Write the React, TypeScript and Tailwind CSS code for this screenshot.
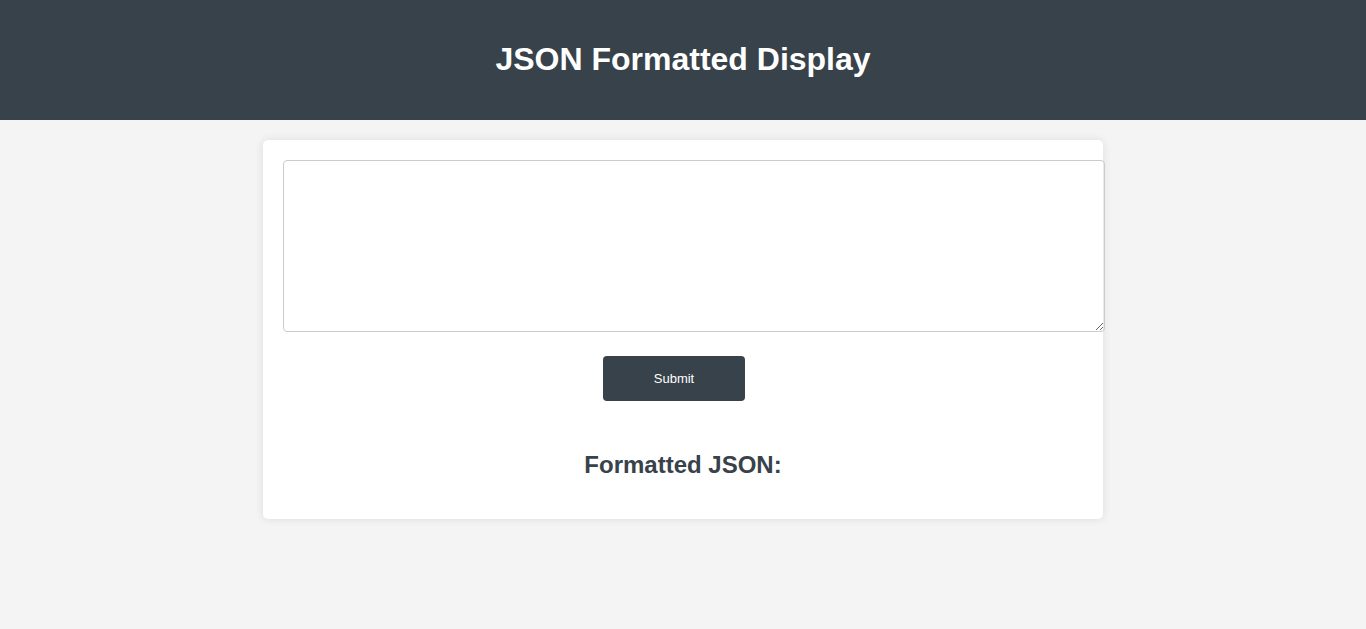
export default function App() {
  return (
    <div className="min-h-screen bg-[#f4f4f4] font-['Liberation_Sans',Arial,sans-serif]">
      <header className="flex h-[120px] items-center justify-center bg-[#37424a] pb-[2px]">
        <h1 className="text-[32px] font-bold text-white">JSON Formatted Display</h1>
      </header>

      <main className="mx-auto mt-5 w-[840px] rounded-[5px] bg-white p-5 shadow-[0_0_10px_rgba(0,0,0,0.1)]">
        <textarea className="block h-[172px] w-[822px] resize-y rounded-[4px] border border-[#cccccc] p-[10px] text-sm outline-none" />
        <div className="mt-6 flex">
          <button className="ml-[320px] h-[45px] w-[142px] rounded-[4px] bg-[#37424a] text-[13px] text-white">Submit</button>
        </div>
        <h2 className="mb-5 mt-[50px] text-center text-2xl font-bold leading-[28px] text-[#37424a]">Formatted JSON:</h2>
      </main>
    </div>
  );
}
